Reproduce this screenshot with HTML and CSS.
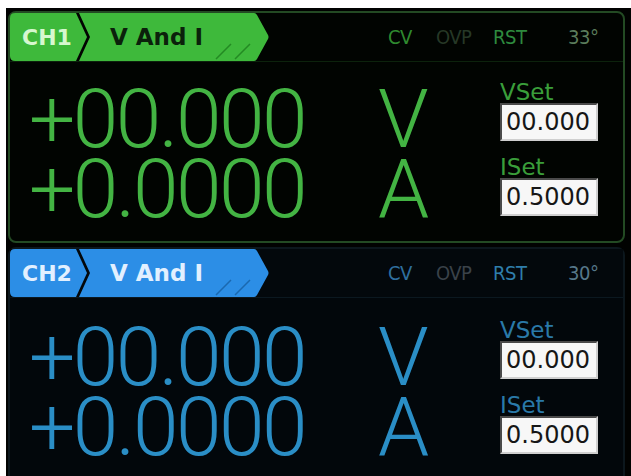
FILE: index.html
```html
<!DOCTYPE html>
<html lang="en">
<head>
    <meta charset="UTF-8">
    <meta name="viewport" content="width=device-width, initial-scale=1.0">
    <title>Power Supply</title>
    <link rel="stylesheet" href="styles.css">
</head>
<body>

    <div class="screen">
        <section class="channel ch1">
            <div class="header">
                <svg class="tab" width="262" height="48" viewBox="0 0 262 48">
                    <path class="tab-ch" d="M5 0 H66 L77 24 L66 48 H5 Q0 48 0 43 V5 Q0 0 5 0 Z"/>
                    <path class="tab-mode" d="M69 0 H244 Q246 0 247 2 L258 22 Q259 24 258 26 L247 46 Q246 48 244 48 H69 L80 24 Z"/>
                    <path class="tab-hash" d="M206 46 L221 31 M225 46 L240 31"/>
                    <text class="tab-ch-text" x="12" y="32">CH1</text>
                    <text class="tab-mode-text" x="100" y="32">V And I</text>
                </svg>
                <div class="status">
                    <span class="st st-cv">CV</span>
                    <span class="st st-ovp">OVP</span>
                    <span class="st st-rst">RST</span>
                    <span class="st st-temp">33°</span>
                </div>
            </div>
            <div class="body">
                <div class="readings">
                    <div class="value">+00.000</div>
                    <div class="unit">V</div>
                    <div class="value">+0.0000</div>
                    <div class="unit">A</div>
                </div>
                <div class="sets">
                    <div class="set-label">VSet</div>
                    <div class="set-box">00.000</div>
                    <div class="set-label second">ISet</div>
                    <div class="set-box">0.5000</div>
                </div>
            </div>
        </section>

        <section class="channel ch2">
            <div class="header">
                <svg class="tab" width="262" height="48" viewBox="0 0 262 48">
                    <path class="tab-ch" d="M5 0 H66 L77 24 L66 48 H5 Q0 48 0 43 V5 Q0 0 5 0 Z"/>
                    <path class="tab-mode" d="M69 0 H244 Q246 0 247 2 L258 22 Q259 24 258 26 L247 46 Q246 48 244 48 H69 L80 24 Z"/>
                    <path class="tab-hash" d="M206 46 L221 31 M225 46 L240 31"/>
                    <text class="tab-ch-text" x="12" y="32">CH2</text>
                    <text class="tab-mode-text" x="100" y="32">V And I</text>
                </svg>
                <div class="status">
                    <span class="st st-cv">CV</span>
                    <span class="st st-ovp">OVP</span>
                    <span class="st st-rst">RST</span>
                    <span class="st st-temp">30°</span>
                </div>
            </div>
            <div class="body">
                <div class="readings">
                    <div class="value">+00.000</div>
                    <div class="unit">V</div>
                    <div class="value">+0.0000</div>
                    <div class="unit">A</div>
                </div>
                <div class="sets">
                    <div class="set-label">VSet</div>
                    <div class="set-box">00.000</div>
                    <div class="set-label second">ISet</div>
                    <div class="set-box">0.5000</div>
                </div>
            </div>
        </section>
    </div>

</body>
</html>
```

FILE: styles.css
```css
html, body {
    margin: 0;
    background-color: #fff;
}
.screen {
    margin: 8px 0 0 6px;
    height: 468px;
    background-color: #010201;
    overflow: hidden;
}
.channel {
    margin: 0 6px 0 2px;
    border: 2px solid #234a23;
    border-radius: 8px;
}
.ch1 {
    margin-top: 3px;
    height: 228px;
    background-color: #010401;
}
.ch2 {
    margin-top: 4px;
    height: 240px;
    border-color: #0c171d;
    border-bottom: none;
    border-radius: 8px 8px 0 0;
    background-color: #02070b;
}
.header {
    display: flex;
    align-items: center;
    height: 48px;
    border-bottom: 1px solid #0c220c;
}
.ch2 .header {
    border-bottom-color: #0b1820;
    background-color: #03080c;
}
.tab {
    display: block;
    flex: none;
}
.ch1 .tab-ch,
.ch1 .tab-mode {
    fill: #3eb93b;
}
.ch2 .tab-ch,
.ch2 .tab-mode {
    fill: #2c8ee6;
}
.tab-hash {
    fill: none;
    stroke-width: 1.5;
}
.ch1 .tab-hash {
    stroke: #238a23;
}
.ch2 .tab-hash {
    stroke: #1a68b0;
}
.tab-ch-text {
    font-family: "DejaVu Sans", sans-serif;
    font-weight: bold;
    font-size: 22px;
}
.tab-mode-text {
    font-family: "DejaVu Sans", sans-serif;
    font-weight: bold;
    font-size: 23px;
}
.ch1 .tab-ch-text {
    fill: #d6f7cf;
}
.ch1 .tab-mode-text {
    fill: #0b210b;
}
.ch2 .tab-ch-text,
.ch2 .tab-mode-text {
    fill: #e2f0ff;
}
.status {
    display: flex;
    margin-left: auto;
    font-family: "Liberation Sans Narrow", "DejaVu Sans Condensed", sans-serif;
    font-size: 20px;
    letter-spacing: -0.5px;
}
.st-cv {
    width: 48px;
}
.st-ovp {
    width: 57px;
}
.st-rst {
    width: 75px;
}
.st-temp {
    width: 55px;
}
.ch1 .st-cv { color: #2f8a2f; }
.ch1 .st-ovp { color: #263826; }
.ch1 .st-rst { color: #2e8a3e; }
.ch1 .st-temp { color: #5b7d5b; }
.ch2 .st-cv { color: #2f6f9e; }
.ch2 .st-ovp { color: #3a4249; }
.ch2 .st-rst { color: #2f7eaa; }
.ch2 .st-temp { color: #56788a; }
.body {
    display: flex;
}
.readings {
    display: grid;
    grid-template-columns: 349px 122px;
    padding: 22px 0 0 19px;
    font-family: Roboto, "Liberation Sans", sans-serif;
    font-weight: 300;
    font-size: 82px;
    line-height: 70px;
}
.value {
    letter-spacing: -2.5px;
}
.ch1 .readings {
    color: #43b443;
}
.ch2 .readings {
    color: #2a8ec6;
}
.ch2 .readings {
    padding-top: 24px;
}
.sets {
    padding-top: 19px;
}
.ch2 .sets {
    padding-top: 21px;
}
.set-label {
    font-family: "DejaVu Sans", sans-serif;
    font-size: 23px;
    line-height: 22px;
}
.set-label.second {
    margin-top: 15px;
}
.ch1 .set-label {
    color: #3a9e3a;
}
.ch2 .set-label {
    color: #2a79a8;
}
.set-box {
    box-sizing: border-box;
    width: 98px;
    height: 38px;
    padding-left: 4px;
    display: flex;
    align-items: center;
    background-color: #f7f7f7;
    border: 2px solid;
    border-color: #4a4a4a #cfcfcf #cfcfcf #4a4a4a;
    font-family: "DejaVu Sans", sans-serif;
    font-size: 24px;
    color: #161616;
}
```
